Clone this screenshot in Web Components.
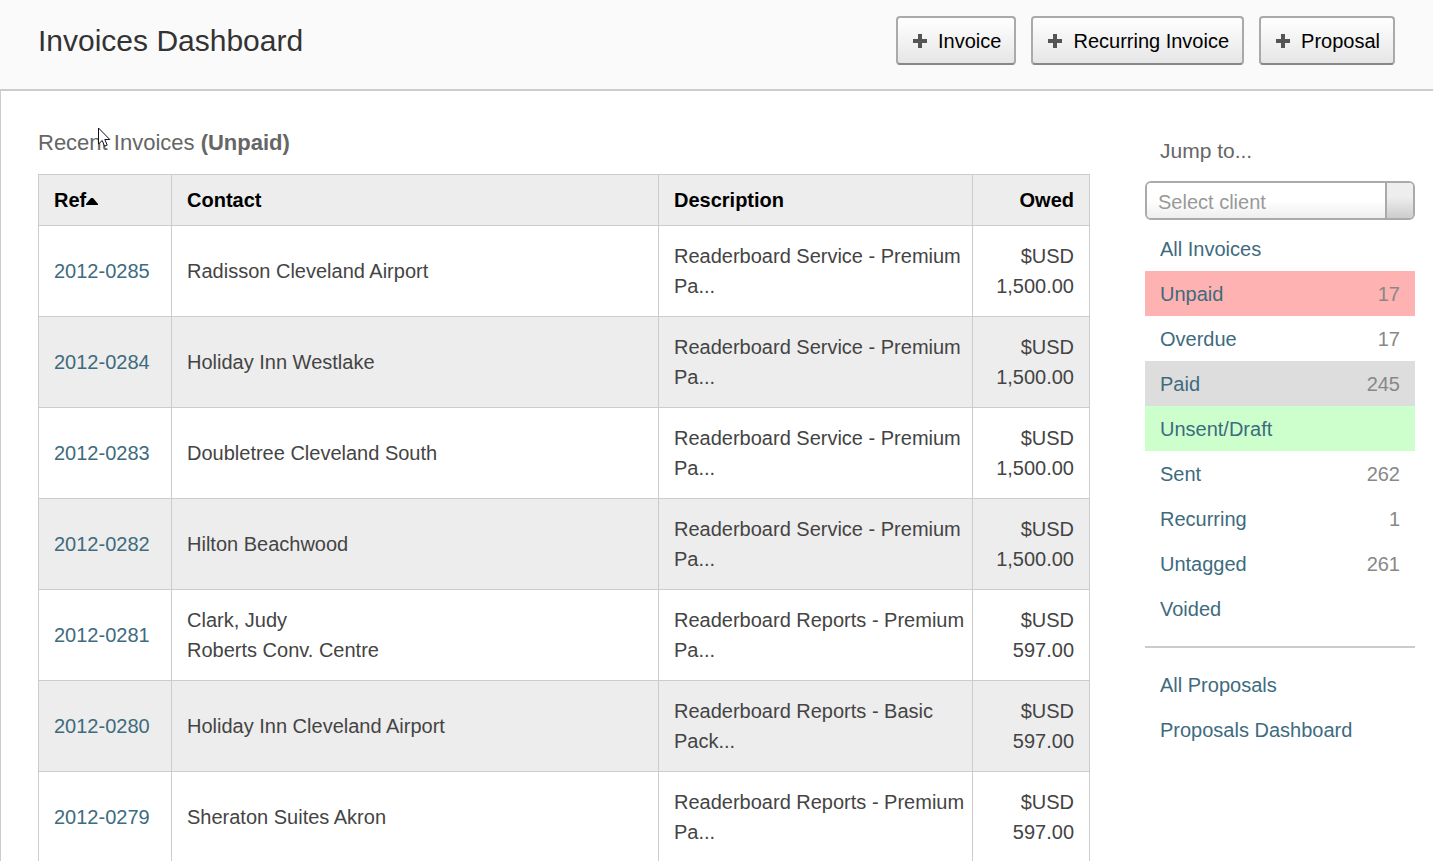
<!DOCTYPE html>
<html lang="en">
<head>
<meta charset="utf-8">
<title>Invoices Dashboard</title>
<style>
  :root {
    --color-text: #444;
    --color-muted: #666;
    --color-count: #888;
    --color-link: #3e6b7e;
    --color-line: #ccc;
    --color-stripe: #ededed;
    --color-control: #aaa;
  }

  body {
    margin: 0;
    overflow: hidden;
    background: #fff;
    color: var(--color-text);
    font: 20px/30px "Liberation Sans", Arial, sans-serif;
  }
</style>
</head>
<body>
<invoices-page>
  <page-header slot="header">
    Invoices Dashboard
    <add-button slot="actions">Invoice</add-button>
    <add-button slot="actions">Recurring Invoice</add-button>
    <add-button slot="actions">Proposal</add-button>
  </page-header>
  <invoice-table>Recent Invoices <strong>(Unpaid)</strong></invoice-table>
  <side-nav slot="aside">
    <client-picker slot="picker" label="Jump to..." placeholder="Select client"></client-picker>
    <nav-item>All Invoices</nav-item>
    <nav-item tone="red" count="17">Unpaid</nav-item>
    <nav-item count="17">Overdue</nav-item>
    <nav-item tone="grey" count="245">Paid</nav-item>
    <nav-item tone="green">Unsent/Draft</nav-item>
    <nav-item count="262">Sent</nav-item>
    <nav-item count="1">Recurring</nav-item>
    <nav-item count="261">Untagged</nav-item>
    <nav-item>Voided</nav-item>
    <nav-item slot="more">All Proposals</nav-item>
    <nav-item slot="more">Proposals Dashboard</nav-item>
  </side-nav>
</invoices-page>
<mouse-pointer></mouse-pointer>

<script>
class BaseElement extends HTMLElement {
  constructor() {
    super();
    this.attachShadow({mode: 'open'});
  }

  connectedCallback() {
    this.shadowRoot.innerHTML = this.render();
  }
}

class InvoicesPage extends BaseElement {
  render() {
    return `
<style>
  :host {
    display: flex;
    flex-direction: column;
    min-height: 100vh;
  }

  .content {
    flex: 1;
    display: grid;
    grid-template-columns: minmax(0, 1fr) 270px;
    column-gap: 55px;
    padding: 37px 18px 0 37px;
    border-left: 1px solid var(--color-line);
  }
</style>
<slot name="header"></slot>
<div class="content">
  <main><slot></slot></main>
  <aside><slot name="aside"></slot></aside>
</div>`;
  }
}

class PageHeader extends BaseElement {
  render() {
    return `
<style>
  :host {
    display: block;
  }

  header {
    display: flex;
    align-items: center;
    justify-content: space-between;
    padding: 16px 38px 24px;
    background: #fafafa;
    border-bottom: 2px solid var(--color-line);
  }

  h1 {
    margin: 0;
    color: #333;
    font-size: 30px;
    font-weight: normal;
  }

  .actions {
    display: flex;
    gap: 15px;
  }
</style>
<header>
  <h1><slot></slot></h1>
  <div class="actions"><slot name="actions"></slot></div>
</header>`;
  }
}

class AddButton extends BaseElement {
  render() {
    return `
<style>
  :host {
    display: block;
  }

  button {
    display: flex;
    align-items: center;
    gap: 11px;
    height: 49px;
    padding: 0 13px 0 15px;
    border: 2px solid var(--color-control);
    border-bottom-color: #888;
    border-radius: 4px;
    background: linear-gradient(#fff, #e6e6e6);
    color: #000;
    font: inherit;
  }
</style>
<button type="button">
  <svg width="14" height="14" viewBox="0 0 14 14" aria-hidden="true">
    <path d="M5 0h4v5h5v4H9v5H5V9H0V5h5z" fill="#555"/>
  </svg>
  <span><slot></slot></span>
</button>`;
  }
}

class InvoiceTable extends BaseElement {
  constructor() {
    super();
    this.invoices = [
      ['2012-0285', 'Radisson Cleveland Airport', 'Readerboard Service - Premium<br>Pa...', '1,500.00'],
      ['2012-0284', 'Holiday Inn Westlake', 'Readerboard Service - Premium<br>Pa...', '1,500.00'],
      ['2012-0283', 'Doubletree Cleveland South', 'Readerboard Service - Premium<br>Pa...', '1,500.00'],
      ['2012-0282', 'Hilton Beachwood', 'Readerboard Service - Premium<br>Pa...', '1,500.00'],
      ['2012-0281', 'Clark, Judy<br>Roberts Conv. Centre', 'Readerboard Reports - Premium<br>Pa...', '597.00'],
      ['2012-0280', 'Holiday Inn Cleveland Airport', 'Readerboard Reports - Basic<br>Pack...', '597.00'],
      ['2012-0279', 'Sheraton Suites Akron', 'Readerboard Reports - Premium<br>Pa...', '597.00'],
    ];
  }

  renderRow([ref, contact, description, owed]) {
    return `
    <tr>
      <td><a href="#${ref}">${ref}</a></td>
      <td>${contact}</td>
      <td>${description}</td>
      <td>$USD<br>${owed}</td>
    </tr>`;
  }

  render() {
    return `
<style>
  :host {
    display: block;
  }

  h2 {
    margin: 0 0 16px;
    color: var(--color-muted);
    font-size: 22px;
    font-weight: normal;
  }

  table {
    width: 100%;
    table-layout: fixed;
    border-collapse: collapse;
  }

  .ref {
    width: 133px;
  }

  .description {
    width: 314px;
  }

  .owed {
    width: 117px;
  }

  th, td {
    box-sizing: border-box;
    padding: 15px;
    border: 1px solid var(--color-line);
    text-align: left;
    white-space: nowrap;
  }

  th {
    padding: 10px 15px;
    background: var(--color-stripe);
    color: #000;
  }

  tbody tr:nth-child(even) {
    background: var(--color-stripe);
  }

  th:last-child, td:last-child {
    text-align: right;
  }

  a {
    color: var(--color-link);
    text-decoration: none;
  }

  svg {
    vertical-align: middle;
  }
</style>
<h2><slot></slot></h2>
<table>
  <colgroup><col class="ref"><col><col class="description"><col class="owed"></colgroup>
  <thead>
    <tr>
      <th>Ref<svg width="12" height="7" viewBox="0 0 12 7" aria-hidden="true"><path d="M0 7V6l5-6h2l5 6v1z"/></svg></th>
      <th>Contact</th>
      <th>Description</th>
      <th>Owed</th>
    </tr>
  </thead>
  <tbody>${this.invoices.map((invoice) => this.renderRow(invoice)).join('')}
  </tbody>
</table>`;
  }
}

class SideNav extends BaseElement {
  render() {
    return `
<style>
  :host {
    display: block;
    padding-top: 8px;
  }

  nav {
    margin-top: 6px;
  }

  hr {
    margin: 15px 0 14px;
    border: 0;
    border-top: 2px solid var(--color-line);
  }
</style>
<slot name="picker"></slot>
<nav>
  <slot></slot>
  <hr>
  <slot name="more"></slot>
</nav>`;
  }
}

class ClientPicker extends BaseElement {
  render() {
    return `
<style>
  :host {
    display: block;
  }

  label {
    display: block;
    margin: 0 15px 15px;
    color: var(--color-muted);
    font-size: 21px;
  }

  .box {
    display: flex;
    box-sizing: border-box;
    height: 39px;
    border: 2px solid var(--color-control);
    border-radius: 6px;
    overflow: hidden;
  }

  input {
    flex: 1;
    min-width: 0;
    padding: 2px 11px 0;
    border: 0;
    background: linear-gradient(#fff 50%, #eee);
    color: var(--color-text);
    font: inherit;
  }

  input::placeholder {
    color: #999;
  }

  button {
    width: 28px;
    padding: 0;
    border: 0;
    border-left: 2px solid var(--color-control);
    background: linear-gradient(#eee 40%, #ccc);
  }
</style>
<label for="client">${this.getAttribute('label')}</label>
<div class="box">
  <input id="client" type="text" placeholder="${this.getAttribute('placeholder')}">
  <button type="button" aria-label="Show clients"></button>
</div>`;
  }
}

class NavItem extends BaseElement {
  render() {
    return `
<style>
  :host {
    display: block;
  }

  :host([tone='red']) {
    background: #ffb2b2;
  }

  :host([tone='grey']) {
    background: #ddd;
  }

  :host([tone='green']) {
    background: #cfc;
  }

  a {
    display: flex;
    justify-content: space-between;
    padding: 8px 15px 7px;
    color: var(--color-link);
    text-decoration: none;
  }

  .count {
    color: var(--color-count);
  }
</style>
<a href="#">
  <span><slot></slot></span>
  <span class="count">${this.getAttribute('count') || ''}</span>
</a>`;
  }
}

// Floats over the page, tip of the arrow at the top left of its box
class MousePointer extends BaseElement {
  render() {
    return `
<style>
  :host {
    position: absolute;
    top: 127px;
    left: 98px;
    line-height: 0;
    pointer-events: none;
  }
</style>
<svg width="13" height="21" viewBox="0 0 13 21" aria-hidden="true">
  <path d="M.5 1v16l3.700-3.500 2.400 5.700 2.600-1.100-2.400-5.600h5z" fill="#fff" stroke="#112"/>
</svg>`;
  }
}

customElements.define('invoices-page', InvoicesPage);
customElements.define('page-header', PageHeader);
customElements.define('add-button', AddButton);
customElements.define('invoice-table', InvoiceTable);
customElements.define('side-nav', SideNav);
customElements.define('client-picker', ClientPicker);
customElements.define('nav-item', NavItem);
customElements.define('mouse-pointer', MousePointer);
</script>
</body>
</html>
